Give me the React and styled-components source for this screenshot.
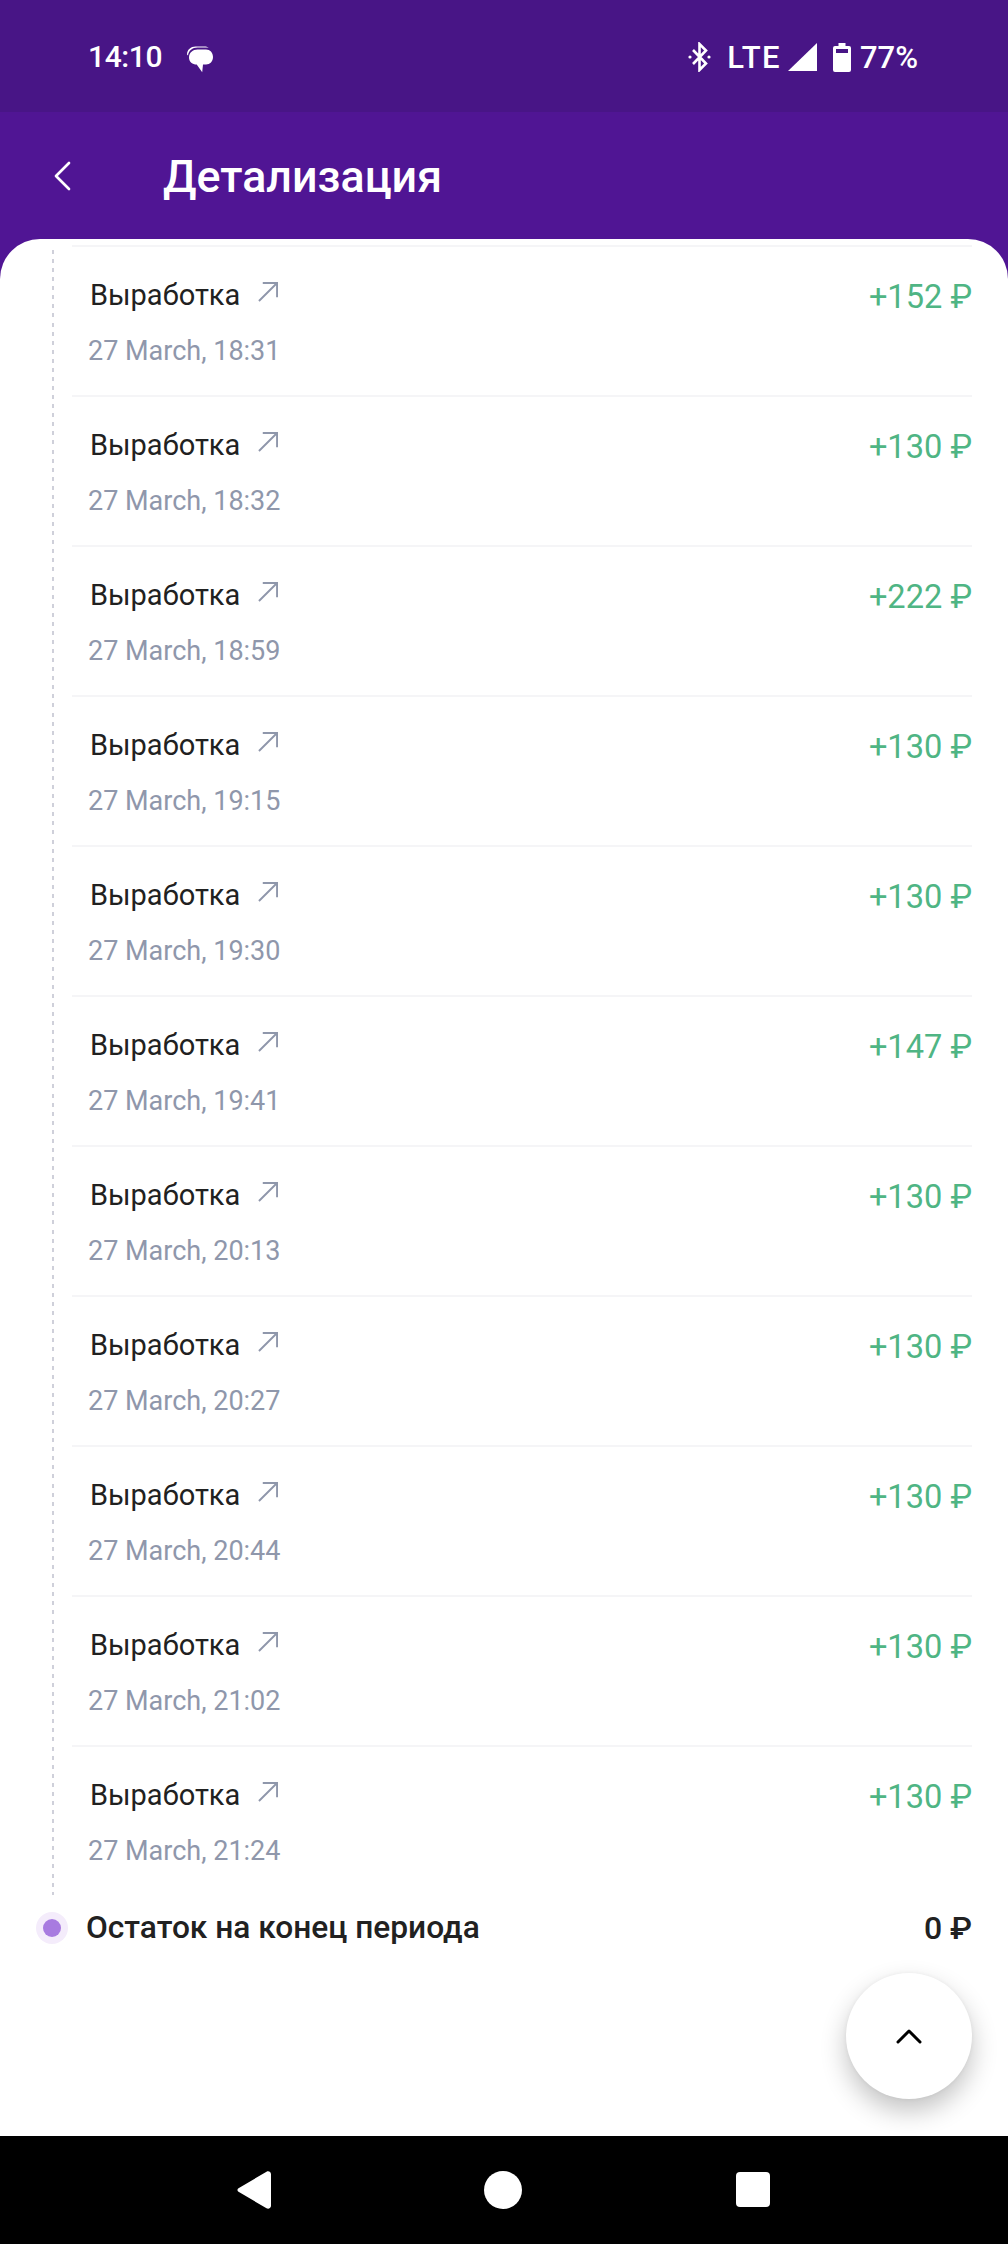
import React from "react";
import styled, { createGlobalStyle } from "styled-components";

const Global = createGlobalStyle`
  html, body { margin: 0; padding: 0; background: #fff; }
  * { box-sizing: border-box; }
  body { font-family: Roboto, "Liberation Sans", sans-serif; }
`;

const Page = styled.div`
  position: relative;
  width: 1008px;
  height: 2244px;
  display: flex;
  flex-direction: column;
  overflow: hidden;
  background: #fff;
`;

const StatusBar = styled.div`
  height: 112px;
  flex: none;
  background: #481586;
  color: #fff;
  display: flex;
  align-items: center;
  justify-content: space-between;
  padding: 2px 90px 0 88px;
  font-size: 31px;
  font-weight: 500;
`;

const StatusGroup = styled.div`
  display: flex;
  align-items: center;
`;

const Clock = styled.span`
  margin-right: 24px;
  line-height: 1;
  font-size: 30px;
  letter-spacing: -0.4px;
`;

const Lte = styled.span`
  margin: 0 7px 0 16px;
  line-height: 1;
  letter-spacing: 1.4px;
`;

const Percent = styled.span`
  margin-left: 9px;
  line-height: 1;
`;

const Header = styled.div`
  flex: none;
  height: 167px;
  background: #501594;
  display: flex;
  align-items: flex-start;
  padding: 40px 0 0 53px;
  color: #fff;
`;

const Title = styled.h1`
  margin: 0 0 0 92px;
  font-size: 44.8px;
  line-height: 50px;
  font-weight: 500;
`;

const Card = styled.div`
  flex: 1;
  margin-top: -40px;
  background: #fff;
  border-radius: 40px 40px 0 0;
  padding-top: 6px;
  z-index: 1;
`;

const Timeline = styled.div`
  padding: 0 36px 0 72px;
  background-image: repeating-linear-gradient(
    to bottom,
    transparent 0 5px,
    #cfd0da 5px 9px,
    transparent 9px 9.07px
  );
  background-repeat: no-repeat;
  background-size: 2px 100%;
  background-position: 52px 0;
`;

const Row = styled.div`
  height: 150px;
  border-top: 2px solid #f5f5f7;
  display: flex;
  justify-content: space-between;
  align-items: flex-start;
`;

const RowInfo = styled.div`
  display: flex;
  flex-direction: column;
  padding-left: 16px;
`;

const RowName = styled.div`
  display: flex;
  align-items: flex-start;
  margin-top: 31px;
  padding-left: 2px;
  font-size: 29px;
  line-height: 34px;
  color: #212121;
`;

const RowDate = styled.div`
  margin-top: 23px;
  font-size: 27px;
  line-height: 32px;
  color: #8f97ab;
`;

const Amount = styled.div`
  margin-top: 31px;
  font-size: 32.6px;
  line-height: 38px;
  color: #4fb584;
`;

const Arrow = styled.svg`
  width: 20px;
  height: 20px;
  margin: 4px 0 0 18px;
  flex: none;
`;

const Summary = styled.div`
  display: flex;
  align-items: center;
  justify-content: space-between;
  padding: 15px 36px 0 36px;
`;

const SummaryLabel = styled.div`
  display: flex;
  align-items: center;
  font-size: 31.7px;
  line-height: 36px;
  font-weight: 500;
  color: #212121;
`;

const Dot = styled.span`
  width: 32px;
  height: 32px;
  border-radius: 50%;
  background: #f4ecfb;
  display: flex;
  align-items: center;
  justify-content: center;
  margin-right: 18px;
  &::after {
    content: "";
    width: 18px;
    height: 18px;
    border-radius: 50%;
    background: #a87be0;
  }
`;

const SummaryValue = styled.div`
  font-size: 32px;
  line-height: 36px;
  font-weight: 500;
  color: #212121;
`;

const Fab = styled.button`
  position: absolute;
  right: 36px;
  bottom: 145px;
  width: 126px;
  height: 126px;
  border: 0;
  padding: 0;
  border-radius: 50%;
  background: #fff;
  box-shadow: 0 12px 26px rgba(0, 0, 0, 0.24), 0 0 4px rgba(0, 0, 0, 0.05);
  display: flex;
  align-items: center;
  justify-content: center;
  z-index: 2;
`;

const NavBar = styled.div`
  flex: none;
  height: 108px;
  background: #000;
  position: relative;
  display: grid;
  grid-template-columns: 237px 34px 213px 38px 214px 34px;
  padding-top: 35px;
  align-items: start;
  z-index: 1;
`;

const rows = [
  ["18:31", 152], ["18:32", 130], ["18:59", 222], ["19:15", 130], ["19:30", 130], ["19:41", 147],
  ["20:13", 130], ["20:27", 130], ["20:44", 130], ["21:02", 130], ["21:24", 130],
];

export default function App() {
  return (
    <Page>
      <Global />
      <StatusBar>
        <StatusGroup>
          <Clock>14:10</Clock>
          <svg width="28" height="27" viewBox="0 0 27 27" fill="#fff" style={{ marginTop: 4 }}>
            <path d="M0.500 8.500C0.500 3.500 4.500 .5 9 .5h9c1.500 0 3 .4 4.200 1.300C21 1.500 19.600 1.400 18 1.400h-7C6 1.400 2 4.500 1.500 9.500z" />
            <path d="M2.500 11.500C2.500 6.500 6.500 3.500 11 3.500h8.500c4 0 7 3 7 7.500s-3 7.500-7 7.500h-3l-.8 7.800-5.500-7.800C6 18.500 2.500 16 2.500 11.500z" />
          </svg>
        </StatusGroup>
        <StatusGroup>
          <svg width="23" height="30" viewBox="0 0 23 30" fill="none" stroke="#fff" strokeWidth="2.6">
            <path d="M5 8l13 13.500-6.500 6.500V2l6.500 6.500L5 22" />
            <circle cx="2" cy="15" r="1.600" fill="#fff" stroke="none" />
            <circle cx="21" cy="15" r="1.600" fill="#fff" stroke="none" />
          </svg>
          <Lte>LTE</Lte>
          <svg width="29" height="28" viewBox="0 0 29 28" fill="#fff">
            <path d="M29 0v28H0z" />
          </svg>
          <svg width="18" height="29" viewBox="0 0 18 29" fill="#fff" style={{ marginLeft: 16 }}>
            <path fillRule="evenodd" d="M5.500 0h7v3H16a2 2 0 0 1 2 2v22a2 2 0 0 1-2 2H2a2 2 0 0 1-2-2V5a2 2 0 0 1 2-2h3.500zM3 6v4h12V6z" />
          </svg>
          <Percent>77%</Percent>
        </StatusGroup>
      </StatusBar>
      <Header>
        <svg width="18" height="32" viewBox="0 0 18 32" fill="none" stroke="#fff" strokeWidth="2.700" strokeLinecap="round" strokeLinejoin="round" style={{ marginTop: 8 }}>
          <path d="M16 3L3 16l13 13" />
        </svg>
        <Title>Детализация</Title>
      </Header>
      <Card>
        <Timeline>
          {rows.map(([time, sum]) => (
            <Row key={time}>
              <RowInfo>
                <RowName>
                  Выработка
                  <Arrow viewBox="0 0 21 21" fill="none" stroke="#8f97ab" strokeWidth="2">
                    <path d="M1 20L20 1M5 1h15v15" />
                  </Arrow>
                </RowName>
                <RowDate>27 March, {time}</RowDate>
              </RowInfo>
              <Amount>+{sum} ₽</Amount>
            </Row>
          ))}
        </Timeline>
        <Summary>
          <SummaryLabel>
            <Dot />
            Остаток на конец периода
          </SummaryLabel>
          <SummaryValue>0 ₽</SummaryValue>
        </Summary>
      </Card>
      <Fab aria-label="up">
        <svg width="26" height="16" viewBox="0 0 26 16" fill="none" stroke="#000" strokeWidth="3" strokeLinecap="round" strokeLinejoin="round">
          <path d="M2 14L13 3l11 11" />
        </svg>
      </Fab>
      <NavBar>
        <span />
        <svg width="34" height="38" viewBox="0 0 34 38" fill="#fff">
          <path d="M1.500 17.200L29.500.700c2-1.100 4.500.2 4.500 2.500v31.600c0 2.300-2.500 3.600-4.500 2.500L1.500 20.800c-1.400-.8-1.400-2.800 0-3.600z" />
        </svg>
        <span />
        <svg width="38" height="38" viewBox="0 0 38 38" fill="#fff">
          <circle cx="19" cy="19" r="19" />
        </svg>
        <span />
        <svg width="34" height="35" viewBox="0 0 34 35" fill="#fff" style={{ marginTop: 1 }}>
          <rect width="34" height="35" rx="4" />
        </svg>
      </NavBar>
    </Page>
  );
}
